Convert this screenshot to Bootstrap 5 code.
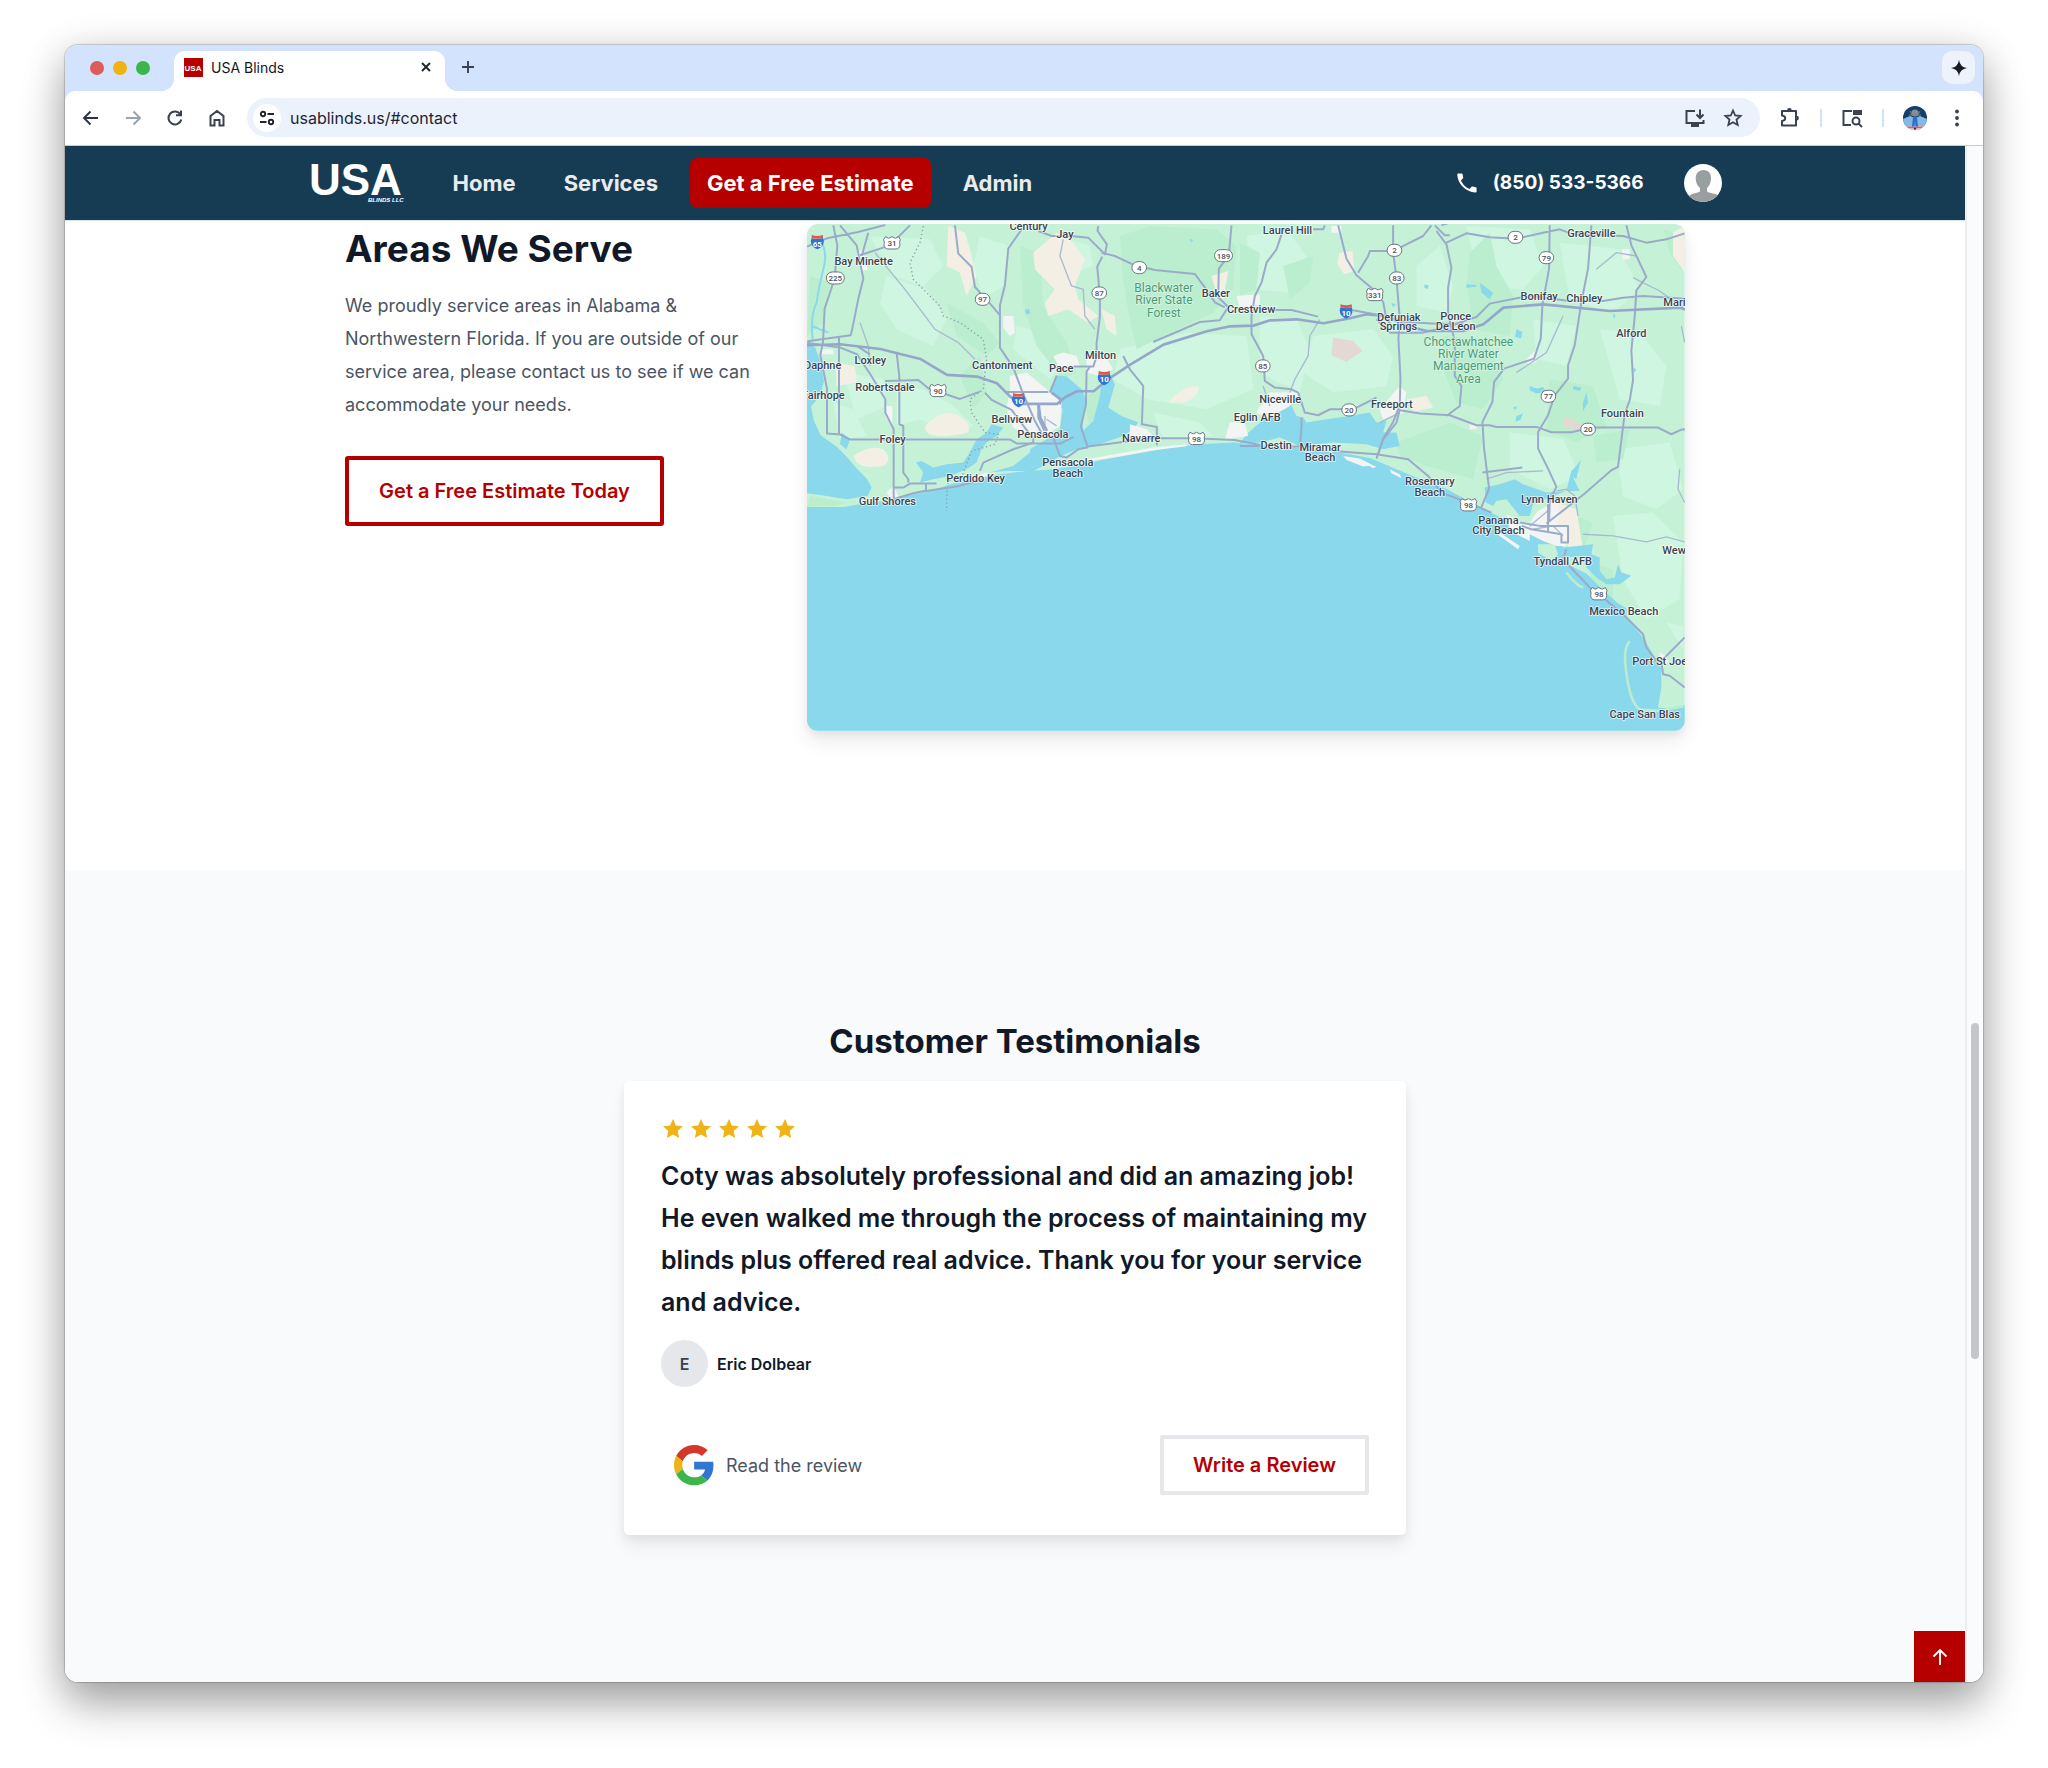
<!DOCTYPE html>
<html lang="en">
<head>
<meta charset="utf-8">
<meta name="viewport" content="width=device-width, initial-scale=1">
<title>USA Blinds</title>
<link href="https://cdn.jsdelivr.net/npm/bootstrap@5.3.0/dist/css/bootstrap.min.css" rel="stylesheet">
<style>
  :root { --navy:#163c54; --brand:#b60000; --ink:#111827; --slate:#4b5563; --icon:#2b3240; }
  body { font-family: Inter, "Liberation Sans", sans-serif; background:#fff; color:var(--ink); min-height:100vh; padding:45px 65px 86px; }
  svg { display:block; flex:none; }
  a { text-decoration:none; }
  .window-frame { border-radius:13px; box-shadow:0 0 1px 1px rgba(0,0,0,.18), 0 22px 44px rgba(0,0,0,.32), 0 4px 40px rgba(0,0,0,.12); }

  /* browser tab strip */
  .tab-strip { height:46px; background:#d3e2fd; padding:6px 8px 0 25px; }
  .lights { gap:9px; padding-top:10px; }
  .light { width:14px; height:14px; border-radius:50%; }
  .light-r { background:#dc5b5b; } .light-y { background:#efb315; } .light-g { background:#3cb64b; }
  .page-tab { width:271px; height:40px; margin-left:24px; padding:0 10px 8px 10px; background:#fff; border-radius:11px 11px 0 0; font-size:14px; }
  .page-tab::before, .page-tab::after { content:""; position:absolute; bottom:0; width:13px; height:13px; }
  .page-tab::before { left:-13px; background:radial-gradient(circle at 0 0, transparent 13px, #fff 13px); }
  .page-tab::after { right:-13px; background:radial-gradient(circle at 100% 0, transparent 13px, #fff 13px); }
  .plain-btn { border:0; background:none; padding:0; line-height:0; }
  .spark-btn { width:33px; height:33px; border-radius:10px; background:#edf2fb; }

  /* browser toolbar */
  .tool-row { height:55px; background:#fff; padding:0 15px 1px; gap:19px; border-bottom:1px solid #c6cccf; border-radius:10px 10px 0 0; }
  .tool-nav { gap:20px; }
  .tool-row .plain-btn { width:22px; height:22px; }
  .tool-row .profile-btn { width:24px; height:24px; }
  .tool-shoulder { background:#d3e2fd; }
  .address-box { height:39px; border-radius:20px; background:#ecf2fb; padding:0 16px 0 6px; }
  .tool-row .site-info { width:28px; height:28px; border-radius:50%; background:#fff; }
  .address-box input { border:0; background:none; outline:0; font-size:16px; color:#1f2530; padding:0; min-width:0; margin-left:9px; }
  .tool-sep { width:2px; height:18px; background:#cfe0fb; }

  /* site header */
  .site-nav { background:var(--navy); height:75px; border-bottom:1px solid #dde4e6; }
  .nav-inner { max-width:1413px; }
  .menu-link { font-size:22px; font-weight:700; color:#e9ebed; line-height:50px; }
  .menu-cta { background:var(--brand); color:#fff; border-radius:7px; padding:0 17px; margin:0 32px; }
  .phone-link { font-size:19px; font-weight:700; color:#fff; }

  /* sections */
  .page-body { background:#fff; min-width:0; }
  .areas-inner { max-width:1340px; }
  .areas-sec { height:649px; padding-top:3px; }
  .areas-map { width:65.5%; border-radius:11px; overflow:hidden; box-shadow:0 12px 20px rgba(0,0,0,.07), 0 4px 8px rgba(0,0,0,.06); }
  .areas-map svg { width:100%; height:auto; font-family:Roboto, sans-serif; }
  .areas-copy { width:415px; }
  .areas-title { font-size:37px; font-weight:700; line-height:50px; margin-bottom:15px; }
  .areas-text { font-size:18px; line-height:33px; color:var(--slate); margin-bottom:35px; }
  .btn-estimate { border:4px solid var(--brand); border-radius:3px; color:var(--brand); font-size:20px; font-weight:600; height:70px; width:319px; padding:0; background:#fff; }
  .testi-sec { background:#f9fafb; padding-top:146px; }
  .testi-title { font-size:33px; font-weight:700; line-height:50px; margin-bottom:15px; }
  .quote-card { max-width:782px; background:#fff; border-radius:5px; padding:36px 37px 40px; box-shadow:0 12px 18px rgba(0,0,0,.06), 0 4px 8px rgba(0,0,0,.06); }
  .quote-text { font-size:25px; font-weight:600; line-height:42px; margin:14px 0 17px; }
  .initial { width:47px; height:47px; border-radius:50%; background:#e5e7eb; color:#374151; font-size:16px; font-weight:600; }
  .reviewer-row { gap:9px; }
  .reviewer { font-size:16px; font-weight:600; }
  .read-link { font-size:18px; color:var(--slate); padding-left:9px; }
  .btn-write { border:4px solid #e5e7eb; border-radius:2px; color:var(--brand); font-size:20px; font-weight:600; width:209px; height:60px; padding:0; background:#fff; }
  .top-btn { width:51px; height:51px; background:var(--brand); }

  /* scroll bar */
  .scroll-col { width:18px; background:#fafbfd; border-left:2px solid #ebedef; padding:0 4px; }
  .scroll-thumb { border-radius:5px; background:#c5c6c9; flex:336 0 0; }
  .scroll-before { flex:877 0 0; } .scroll-after { flex:323 0 0; }
</style>
</head>
<body class="d-flex flex-column">
<div class="window-frame d-flex flex-column flex-grow-1 overflow-hidden">

  <div class="tab-strip d-flex align-items-start">
    <div class="lights d-flex align-items-center">
      <span class="light light-r"></span><span class="light light-y"></span><span class="light light-g"></span>
    </div>
    <div class="page-tab position-relative d-flex align-items-center">
      <svg width="19" height="19" viewBox="0 0 19 19"><rect width="19" height="19" fill="#b60000"/><text x="9" y="13" text-anchor="middle" font-family="Liberation Sans, sans-serif" font-weight="700" font-size="8" fill="#fff">USA</text></svg>
      <span class="ms-2 flex-grow-1">USA Blinds</span>
      <button class="plain-btn" aria-label="Close tab"><svg width="18" height="18" viewBox="0 0 18 18" stroke="#1f2530" stroke-width="1.9"><path d="M5 5l8 8M13 5l-8 8"/></svg></button>
    </div>
    <button class="plain-btn ms-3 mt-2" aria-label="New tab"><svg width="14" height="18" viewBox="0 0 14 18" stroke="#3a4250" stroke-width="1.9"><path d="M1 8h12M7 2v12"/></svg></button>
    <button class="plain-btn spark-btn ms-auto d-flex align-items-center justify-content-center" aria-label="Assistant"><svg width="16" height="16" viewBox="0 0 16 16"><path d="M8 0Q9 7 16 8Q9 9 8 16Q7 9 0 8Q7 7 8 0Z" fill="#161c28"/></svg></button>
  </div>

  <div class="tool-shoulder">
  <div class="tool-row d-flex align-items-center">
    <div class="tool-nav d-flex align-items-center">
      <button class="plain-btn" aria-label="Back"><svg width="22" height="22" viewBox="0 0 22 22" fill="none" stroke="#2b3240" stroke-width="1.9"><path d="M18 11H4M10.500 4.500L4 11l6.500 6.500"/></svg></button>
      <button class="plain-btn" aria-label="Forward"><svg width="22" height="22" viewBox="0 0 22 22" fill="none" stroke="#9aa3ab" stroke-width="1.900"><path d="M4 11h14M11.500 4.500L18 11l-6.500 6.500"/></svg></button>
      <button class="plain-btn" aria-label="Reload"><svg width="22" height="22" viewBox="0 0 22 22" fill="none" stroke="#3a4250" stroke-width="2"><path d="M16.500 7.500A6.500 6.500 0 1 0 17.300 12.500M17 3.500V8.300H12"/></svg></button>
      <button class="plain-btn" aria-label="Home"><svg width="22" height="22" viewBox="0 0 22 22" fill="none" stroke="#3a4250" stroke-width="2"><path d="M4.500 18.500V9L11 4l6.500 5v9.500h-4V13h-5v5.500z"/></svg></button>
    </div>
    <div class="address-box d-flex align-items-center flex-grow-1">
      <button class="plain-btn site-info d-flex align-items-center justify-content-center" aria-label="Site information"><svg width="16" height="16" viewBox="0 0 16 16" fill="none" stroke="#1f2530" stroke-width="1.900"><circle cx="4" cy="4" r="2.200"/><path d="M8.500 4H15M1 12h6.500"/><circle cx="12" cy="12" r="2.200"/></svg></button>
      <input class="flex-grow-1" type="text" value="usablinds.us/#contact" aria-label="Address">
      <button class="plain-btn me-3" aria-label="Install app"><svg width="22" height="22" viewBox="0 0 22 22" fill="none" stroke="#3a4250" stroke-width="2"><path d="M11 4H2.500v12h17v-3M16 2.500v8M12.500 7.500L16 11l3.500-3.500"/><path d="M7 18.500h8" stroke-width="3"/></svg></button>
      <button class="plain-btn" aria-label="Bookmark"><svg width="22" height="22" viewBox="0 0 22 22" fill="none" stroke="#3a4250" stroke-width="1.800"><path d="M11 3.500l2.200 5 5.400.5-4.100 3.600 1.200 5.400L11 15.200 6.300 18l1.200-5.400L3.400 9l5.400-.5z"/></svg></button>
    </div>
    <button class="plain-btn" aria-label="Extensions"><svg width="22" height="22" viewBox="0 0 22 22" fill="none" stroke="#3a4250" stroke-width="2"><path d="M3 4h14v14.500H3v-4.500q3.200-.5 3.200-2.800T3 8.500z" stroke-linejoin="round"/><path d="M8 3.500a2.400 2.400 0 0 1 4.800 0zM17.500 8.800a2.400 2.400 0 0 1 0 4.800z" fill="#3a4250" stroke="none"/></svg></button>
    <span class="tool-sep"></span>
    <button class="plain-btn" aria-label="Search tabs"><svg width="22" height="22" viewBox="0 0 22 22" fill="none" stroke="#3a4250" stroke-width="2"><path d="M11 4H2.500v14H10"/><path d="M12 3h9v5h-9z" fill="#3a4250" stroke="none"/><circle cx="15" cy="14" r="3.500"/><path d="M17.500 16.500l3.500 3.500"/></svg></button>
    <span class="tool-sep"></span>
    <button class="plain-btn profile-btn" aria-label="Profile"><svg width="24" height="24" viewBox="0 0 24 24"><clipPath id="pf"><circle cx="12" cy="12" r="12"/></clipPath><g clip-path="url(#pf)"><path d="M0 0h24v24H0z" fill="#143f6b"/><path d="M0 13l7-3 5 2 5-2 7 3v8H0z" fill="#83b9e6"/><path d="M3 20.500h18V24H3z" fill="#fff"/><path d="M4 20.500h16v2H4z" fill="#e45b5b"/><path d="M10 11h4l1 9.500h-2.500L12 15l-.5 5.500H9z" fill="#2c6fc9"/><circle cx="12" cy="7" r="3.600" fill="#8e8d89"/><path d="M7 5l2 4M17 5l-2 4M6 9h12" stroke="#77838e" fill="none"/><path d="M12 21.500l1.500 1.500L12 24l-1.500-1z" fill="#222"/></g></svg></button>
    <button class="plain-btn" aria-label="Menu"><svg width="22" height="22" viewBox="0 0 22 22" fill="#3a4250"><circle cx="11" cy="4.500" r="1.900"/><circle cx="11" cy="11" r="1.900"/><circle cx="11" cy="17.500" r="1.900"/></svg></button>
  </div>
  </div>

  <div class="d-flex flex-grow-1">
    <div class="page-body flex-grow-1 d-flex flex-column position-relative">
      <nav class="site-nav d-flex justify-content-center">
        <div class="nav-inner d-flex align-items-center w-100">
          <a href="#home" aria-label="USA Blinds LLC"><svg width="96" height="50" viewBox="0 0 96 50" fill="#fff" font-family="Liberation Sans, sans-serif" font-weight="700"><text x="0" y="37" font-size="44">USA</text><text x="59" y="44" font-size="6" font-style="italic">BLINDS LLC</text></svg></a>
          <a class="menu-link mx-5" href="#home">Home</a>
          <a class="menu-link" href="#services">Services</a>
          <a class="menu-link menu-cta" href="#contact">Get a Free Estimate</a>
          <a class="menu-link" href="#admin">Admin</a>
          <a class="phone-link d-flex align-items-center ms-auto" href="tel:8505335366"><svg class="me-3" width="20" height="20" viewBox="0 0 20 20" fill="#fff"><path d="M1.500.4h3c.6 0 1 .3 1.100.9l.6 3.100c.1.500 0 .9-.4 1.200L3.900 7.400c1.700 3.700 4.500 6.500 8.500 8.600l2-2.100c.3-.4.800-.5 1.200-.4l3.100.8c.6.100.9.500.9 1.100v3c0 .700-.5 1.200-1.200 1.200C8.800 19.200.5 10.800.3 1.600.3.900.8.400 1.500.4z"/></svg>(850) 533-5366</a>
          <a class="ms-4 ps-3" href="#account" aria-label="Account"><svg width="38" height="38" viewBox="0 0 38 38"><clipPath id="ua"><circle cx="19" cy="19" r="19"/></clipPath><circle cx="19" cy="19" r="19" fill="#fff"/><path clip-path="url(#ua)" d="M19.500 6c5 0 8 3.500 7.500 9-.3 4-1.500 7-4 9v3c0 2 9 2 12 5v6H4v-5c2-4 12-4 12-6v-3c-2.500-2-4-5-4.300-9C11.500 9.500 14.500 6 19.500 6z" fill="#999e9e"/></svg></a>
        </div>
      </nav>

      <section class="areas-sec d-flex justify-content-center">
        <div class="areas-inner w-100 d-flex justify-content-between align-items-start">
          <div class="areas-copy">
            <h2 class="areas-title">Areas We Serve</h2>
            <p class="areas-text">We proudly service areas in Alabama &amp; Northwestern Florida. If you are outside of our service area, please contact us to see if we can accommodate your needs.</p>
            <button class="btn btn-estimate">Get a Free Estimate Today</button>
          </div>
          <div class="areas-map">
            <svg viewBox="21 24 2634 1521" role="img" aria-label="Map of the service area">
              <rect x="21" y="24" width="2634" height="1521" fill="#c5f2d7"/>
              <!-- lighter fields -->
              <g fill="#cef6e0">
                <path d="M210 60l180 10 40 80-60 60-90-30zM260 180l120 40 60 90-40 80-110-50-50-80zM540 60l90 30-20 120-60 40-30-100zM650 330l90 20 60 90-50 50-110-90zM130 470l120 20 10 80-90 40zM290 510l80 10 90 50 60 60-60 20-100-40-70 20zM780 60l90 30 10 60-60 20zM960 400l200-50 180 10 20 160-140 60-180-30-100-60zM1060 590l140 30 40 40-150 10z"/>
                <path d="M1340 60l120-20 60 80-40 110-120-10zM1380 300l110 10 40 90-30 130-120-60zM1540 360l180-20 60 80-20 90-160 20-90-60zM1850 150l70-60 40 120-20 80-90-20zM2000 30l190 10 40 110-60 70-130-10zM2280 80l180 20 60 120-80 70-130-40zM2200 310l130 20-30 120-90-20zM2400 340l120 10 80 100-20 120-120-20zM2130 650l160 20 50 110-90 40-120-60zM2450 700l160-20 40 140-80 60-100-40zM2440 900l120-10 90 90-10 170-100 60-70-120zM2600 1220l50 10v70z"/>
                <path d="M100 560l60 20 40 80-80 10z"/>
              </g>
              <!-- denser woodland -->
              <g fill="#baeecf">
                <path d="M660 90l60 20 10 160 70 110 30 90-40 20-80-100-40-120zM960 60l90-30 200 10 60 50-10 130-60 70-130 60-100 50-20-90-20-110zM30 180l60 20-20 120-50 40zM440 260l110 60 50 60-40 40-90-60zM480 480l60-60 20 110-40 50z"/>
                <path d="M1320 80l60 30-10 110-50 20zM2010 110l60-60 20 100 50 90-10 120-110-20-20-140zM1930 360l130 10 50 120-60 90-80-20-40-100zM1450 150l90-30-10 80-60 50zM1790 680l160-60 100 40-30 130-140-40-80-30zM2250 490l130 20 40 120-90 50-90-40zM2380 660l110-20-20 90-80 10zM2280 880l100 40-30 90-60-60zM2370 1040l70 20v110l-60-30zM2590 40l60 20v110l-40-60z"/>
                <path d="M30 840l110 20-40 10-79 2zM850 560l50-60 10 60-40 70z"/>
              </g>
              <!-- farmland -->
              <g fill="#f4efe4">
                <path d="M445 30l50 20 20 70 15 60-30 60-20-70-40-20zM700 110l70-60 50 30 35 50-30 80 10 40 60 50-30 20-60-40-60 20-10-40 30-40-60-60zM905 280l40 20 5 60-30-20zM1105 560q40-50 90-50 10 25-40 50zM375 630q50-50 90-35 50 20 40 55-60 15-90 10-40 0-40-30zM160 720q50-35 90-20 30 30 0 50-60 10-80-10zM105 440l60 10 5 50-60 10zM1235 180l50-15-15 90-25-40zM1618 110l40-5 5 60-30 10-20-30zM1820 550l60-10 20 35-60 12zM2620 50l35-20v140l-35-50zM2270 860l60 20 10 60 10 60-30 20-30-60-30-20z"/>
              </g>
              <g fill="#e4d8d3"><path d="M1600 365l60 10 28 30-48 33-45-20zM2292 600l60 28-20 18-40-15z"/></g>
              <!-- water -->
              <g fill="#8ad8ec">
                <path d="M21 385l25 10 14 40 12 60-12 45-27 32 8 40 20 45 50 36 30 30 25 30 35 36 14 26-12 25-63 10-60-10-59-8z"/>
                <path d="M21 873l110 0 60-10 90-12 60-16 60-13 50-17 70-15 80-15 80-10 80-5 90-15 50-12 100-18 100-18 100-12 100-5 80 7 80 5 80 8 90 12 80 14 70 30 80 33 80 30 60 33 70 37 50 25 60 40 60 50 60 40 60 30 45 45 45 40 30 20L2480 1205 2530 1265 2560 1315 2585 1355V1415L2575 1475 2610 1478 2655 1468V1545H21z"/>
                <path d="M750 520l20-42 30 4 45 38 17 40-12 50-2 35 32-30 20-75 5-35-10-25 10-40 10 5 15 30 15 30-20 70 40 25 50 20-15 20-30 20-80 28-60 12-50 22-40 23-40 20h-80l-60 5 80-40 50-30 50-30 40-30 8-60-28-35z"/>
                <path d="M575 625l35 10-20 25-30 20-15 20-15 40-30 20-50 20-50 10-40 10 10-30-22-30 17-5 35 20 40-10 50-5 20-30 20-40 30-20zM125 650l25 20-10 30-20-15z"/>
                <path d="M1340 655l40-35 40-20 20-25 30-15 20 40 20 5 10 15 60-10 70-10 60-10 20 30 30-5-10 35 40 0 10 40-50 10-50-15-100-5-100 10-60-25-60 15-60 2z"/>
                <path d="M2055 815l45-10 45-15 25 15 70 25 60-5 15-60 20-20-15 40 20 40-40 0-40 15-60 25-10 35-30 0-20-25-20-25-30 5-10 15-22-10z"/>
                <path d="M2160 920l40 25 60 20 30 30 90-10-5 30 25 10v40l20 25 25-5 10-40 10 25 30 10-35 25-40 0-30-20-30-30-10-35-60 5-50 10-40-20-20-30-15-25 25 5z"/>
                <path d="M2040 200l40 30-10 20-25-20zM2150 340l18 8-4 20-18-6zM2190 510l20 8 20-5 10 15-30 5-20-10zM2320 510l25 5-5 10-20-5zM2350 560l10-30 5 30-15 25zM2150 600l20-8-8 20-15 5zM1875 205l12 4-4 10-10-4zM1775 260l14 6-10 8zM2440 290l8 10-6 8zM2500 455l10 6-8 12zM2140 575l12-4-4 12zM2330 750l14-20-14 60-10-5zM2000 205l30 2v5l-30 3zM675 282l12-4 4 14-12 4zM1170 68l10 4-6 8z"/>
              </g>
              <path d="M52 60q35 40 18 100-15 60-20 100-20 40-12 110M35 330l50 20" fill="none" stroke="#8ad8ec" stroke-width="6"/>
              <path d="M2490 1275q-16 20-14 60 6 70 20 110 12 30 26 36l60 4 70-14M2300 1070q30 40 50 45" fill="none" stroke="#b9ecd0" stroke-width="8"/>
              <path d="M600 690l90-10 0 30-50 40-90 25-60 15 30-20zM2215 985l50 0 10 30-20 20-40-25z" fill="#c5f2d7"/>
              <!-- towns -->
              <g fill="#f3f4f4">
                <path d="M610 300l30 0 5 50-15 10-20-25zM630 480l50-10 60 50 45 40-5 70-40 25-60 10-40-30-20-60 10-50zM760 420l30-10 40 10 10 30-60 10zM860 410l50 0 30 50-40 20-40-10zM170 110l20-10 5 40 10 20-20 5zM60 400h40v15h-40zM255 570h22v60l-20-25zM990 625l50 15 20 20-70 10zM1290 620l45 0 10 40-70 10zM1310 240l70-5v30l-60 15zM1380 570l50-20 10 30-50 20-20-10zM1410 530l90 0-30 40-70 40-20-30zM1740 580l60-70 20 20-10 60-60 20zM2180 430l30-30v40l-25 5zM2010 625h20v15h-20zM1630 720l50 8 40 20-30 4-50-20zM1770 760l30 15 5 12-30-15zM2210 890l60-40 10 40-10 60-90-10zM2180 920l120 10 0 60-30 0-40-15-60-30zM2120 895l70 35 0 45-60-30zM2580 1310l20 10 5 20-20 20zM2465 100h25v30h-20zM1595 30h30v20h-30zM260 830l20-20 15 30-20 12z"/>
                <path d="M800 745l60-15 100-18 100-17 100-10v6l-100 12-100 18-100 16zM1690 740l40 12-10 5zM2100 950l60 40-5 10-70-50zM500 790l60-20 10 8-60 15z"/>
              </g>
              <!-- state line -->
              <path d="M370 30l-10 50-30 60 10 50 80 80 10 30 50 20 70 50 10 60-10 90-40 30 5 40 40 60 40 5-10 30-70 20-30 80-40 10-5 50v40" fill="none" stroke="#8f9cab" stroke-width="4" stroke-dasharray="4 8"/>
              <!-- minor roads -->
              <g fill="none" stroke="#a9bad0" stroke-width="4">
                <path d="M225 110l90 110 60 80 30 40 70 40 50 50M180 320l25 70 5 60M790 70l-10 50 35 90 35 10 5 80 30 40M1560 310l-30 50-5 60-40 70-15 40M2290 300l-50 110-60 40-30 20M2390 160l60-50 60 10M2655 380l-10-50M2350 955l90 5 100 18 60-15 55 15M2060 790l60-20 110-5M2500 185l80 40 70 50M1740 620l60-30M2640 760l-5 60 20 40M735 600l0 40M740 610l30 20M1390 510l20 60M2190 930l60-50M2200 940l60-10 30 30M2270 825l30-5 25 20 10 60"/>
              </g>
              <!-- main roads -->
              <g fill="none" stroke="#9aabca" stroke-width="6" stroke-linejoin="round">
                <path d="M21 92l60-25 90-18 85-22M330 28l-60 60-90 30M100 28l12 60-8 100-30 90-5 100-8 40 20 100v135l40 3 30 15h480l20 12 130 0 40-20M120 28l50 60 20 100-15 60-18 90-5 20-130 18M205 50l-20 70"/>
                <path d="M21 380l100 15 50 20 40 60 45 75v40l25 50 0 230M170 390l40 25M117 365v290M290 410l8 70v145l12 5v140l15 20v10M280 815l30 0 20-12h80M378 800v25l100-15 70-20M255 495l100-3 30 25 95 32 60-22M280 850l60-18 40-8M555 530l20 22 60 30 60 80M700 665v15l-60 20-90 40-10 25"/>
                <path d="M465 28l10 85 40 40 10 60 50 55 25 30 0-30 15-60 10-110 45-65M600 300v95l40 60 30 80 35 80 25 45M750 530l20-50M620 528h125M820 452h60l10-30v-40l10-80 0-60-8-90 15-30M895 30l-2 15 28 40-6 30-50-50-50-5h-60l-40-15M905 110l40 10 60 28 60 14 120 12 30 40 30 45 30 15M1295 28l-8 90-30 40-2 85 30 30-25 40-60 5-140 60M870 452l-10 15-2 100-15 65 20 60 60-8 90-12 50-5h120l120 5 80 15M970 420l20 40 40 50-4 115 45 8v55M760 665l20 55 20 5 35-25 30-6M715 565v40l18 40"/>
                <path d="M1450 40l-20 60-30 40-15 60-20 40-10 60v55l35 65 5 75 30 20 50 5 20 10 20 60 40 8 35-18h30l50-5 60-30M1505 605v30l-5 55M1320 690l60 0M1470 692h60M1425 282h50l80 20M1540 40h30l5-12M1615 28l25 100 30 50 60 50 20 30 10 50 20 30M1675 170l30-50 5-15h70M1780 28l0 80 10 80 10 120-4 60 6 120-2 80 -20 50-30 50-20 60M1660 283l80 15 80 20 90 5 60 0 60-20 40-40 100-20M1730 310l40 40h100l120-30"/>
                <path d="M1790 100l80-40 25-32M1905 28l30 30 15 0M1925 28l30-10M1910 45l30 40 15 70-10 60v80l20 80v105l20 30-5 60-40 30M1940 80l60-28 70 12 80 4 80-18 50-10 40 15 150 5 70 20 60-10 55-18M2250 28l-2 130-20 110-5 100-20 60-90 30-30 40-5 60-30 60 5 80 15 120-25 60M1800 583l60 10 90 5 80 30h40l20 5h120l45 16h60l60-14h200l40 20 30-14h45M1800 580l-10 40-40 50-15 45"/>
                <path d="M2375 28l-10 130-20 100-20 130-20 60v40l-40 50-20 60 -30 50v50l30 60 25 55-20 40-2 65M2480 28l15 60 45 95-30 40-5 80-10 100 5 90-10 60-15 40-20 160-20 10-80 70-115 90M2190 240l120 15 100 0 60-10 60-5 125 8M2048 770l120-15M1600 705l130 10 95 15 60 50 40 50 80 30 70 30M2160 920l60 10h85v50h-20v-25l-90-15-30-10M2245 865v80M2300 1000l-10 30 80 85 40 30 70 60 50 50 10 40 30 40M2655 1265l-50 50-20 20 5 40 20 5 45 35"/>
              </g>
              <!-- motorways -->
              <path d="M21 388l100-3 120 14 120 30 80 48 90 5 60 20 40 40 30 22h110l25-20 35-18h50l50-40 60-40 100-60 130-40 70-15 70-2 50-16 80-3 80 12 80-15 50-12 60 5 60 30 60 15h110l60-20 60-50 120-10 200 20 210-10 70 25M716 565l5 40 20 40M755 530l28 20-5 15" fill="none" stroke="#94a7cb" stroke-width="8" stroke-linejoin="round"/>

              <!-- route shields -->
              <g fill="#fff" stroke="#6b7483" stroke-width="3">
                <rect x="79" y="168" width="54" height="36" rx="18"/><rect x="526" y="232" width="44" height="36" rx="18"/><rect x="876" y="213" width="44" height="36" rx="18"/><rect x="996" y="137" width="44" height="36" rx="18"/><rect x="1244" y="101" width="54" height="36" rx="18"/>
                <rect x="1762" y="85" width="44" height="36" rx="18"/><rect x="1769" y="168" width="44" height="36" rx="18"/><rect x="2125" y="46" width="44" height="36" rx="18"/><rect x="2218" y="107" width="44" height="36" rx="18"/><rect x="1367" y="432" width="44" height="36" rx="18"/><rect x="1626" y="564" width="44" height="36" rx="18"/><rect x="2224" y="523" width="44" height="36" rx="18"/><rect x="2343" y="622" width="44" height="36" rx="18"/>
                <path id="us" d="M256 62l10 5 10-5 10 5 10-5 5 9q-4 8-1 15-1 13-12 13h-24q-11 0-12-13 3-7-1-15z"/>
                <use href="#us" x="138" y="443"/><use href="#us" x="914" y="587"/><use href="#us" x="1449" y="155"/><use href="#us" x="1730" y="786"/><use href="#us" x="2121" y="1053"/>
              </g>
              <g>
                <g id="ih"><path d="M35 66q17 6 34 0 5 10 1 18-4 10-18 16-14-6-18-16-4-8 1-18z" fill="#2f74cf"/><path d="M35 57q17 6 34 0v9q-17 5-34 0z" fill="#e2574c"/></g>
                <use href="#ih" x="604" y="474"/><use href="#ih" x="861" y="408"/><use href="#ih" x="1587" y="208"/>
              </g>
              <g font-size="24" fill="#4a5260" text-anchor="middle" font-weight="500">
                <text x="106" y="195">225</text><text x="548" y="259">97</text><text x="898" y="240">87</text><text x="1018" y="164">4</text><text x="1271" y="128">189</text><text x="1784" y="112">2</text><text x="1791" y="195">83</text><text x="2147" y="73">2</text><text x="2240" y="134">79</text><text x="1389" y="459">85</text><text x="1648" y="591">20</text><text x="2246" y="550">77</text><text x="2365" y="649">20</text>
                <text x="276" y="91">31</text><text x="414" y="534">90</text><text x="1190" y="679">98</text><text x="1725" y="246">331</text><text x="2006" y="877">98</text><text x="2398" y="1144">98</text>
                <g fill="#fff" font-weight="700"><text x="52" y="92">65</text><text x="656" y="565">10</text><text x="913" y="499">10</text><text x="1639" y="299">10</text></g>
              </g>
              <!-- place names -->
              <g font-size="33" fill="#3b4350" text-anchor="middle" font-weight="500" stroke="#fff" stroke-opacity=".75" stroke-width="5" paint-order="stroke" stroke-linejoin="round">
                <text x="686" y="42">Century</text><text x="795" y="66">Jay</text><text x="191" y="146">Bay Minette</text><text x="211" y="444">Loxley</text><text x="68" y="459">Daphne</text><text x="70" y="550">Fairhope</text><text x="255" y="526">Robertsdale</text><text x="607" y="459">Cantonment</text><text x="784" y="467">Pace</text><text x="902" y="430">Milton</text><text x="636" y="621">Bellview</text><text x="729" y="667">Pensacola</text><text x="278" y="680">Foley</text><text x="804" y="750">Pensacola</text><text x="804" y="782">Beach</text><text x="527" y="798">Perdido Key</text><text x="262" y="867">Gulf Shores</text><text x="1024" y="677">Navarre</text><text x="1248" y="244">Baker</text><text x="1354" y="292">Crestview</text>
                <text x="1463" y="53">Laurel Hill</text><text x="2375" y="63">Graceville</text><text x="1797" y="315">Defuniak</text><text x="1796" y="342">Springs</text><text x="1968" y="311">Ponce</text><text x="1968" y="342">De Leon</text><text x="2218" y="252">Bonifay</text><text x="2354" y="257">Chipley</text><text x="2495" y="363">Alford</text><text x="1441" y="560">Niceville</text><text x="1372" y="616">Eglin AFB</text><text x="1776" y="576">Freeport</text><text x="2468" y="603">Fountain</text><text x="1429" y="699">Destin</text><text x="1561" y="704">Miramar</text><text x="1561" y="736">Beach</text><text x="1890" y="806">Rosemary</text><text x="1890" y="839">Beach</text><text x="2249" y="861">Lynn Haven</text><text x="2096" y="925">Panama</text><text x="2096" y="954">City Beach</text><text x="2289" y="1047">Tyndall AFB</text><text x="2472" y="1196">Mexico Beach</text><text x="2580" y="1347">Port St Joe</text><text x="2535" y="1507">Cape San Blas</text>
                <text x="2591" y="270" text-anchor="start">Mari</text><text x="2588" y="1013" text-anchor="start">Wew</text>
              </g>
              <g font-size="36" fill="#4a9a77" text-anchor="middle" stroke="#d9f7e6" stroke-width="4" paint-order="stroke">
                <text x="1092" y="228">Blackwater</text><text x="1092" y="265">River State</text><text x="1092" y="303">Forest</text>
                <text x="2006" y="390">Choctawhatchee</text><text x="2006" y="427">River Water</text><text x="2006" y="463">Management</text><text x="2006" y="502">Area</text>
              </g>
            </svg>
          </div>
        </div>
      </section>

      <section class="testi-sec flex-grow-1 d-flex flex-column align-items-center">
        <h2 class="testi-title">Customer Testimonials</h2>
        <article class="quote-card w-100">
          <div class="d-flex" role="img" aria-label="5 out of 5 stars">
            <svg width="136" height="24" viewBox="0 0 136 24" fill="#efb315"><path id="st" d="M12 2l2.900 6.500 7.100.7-5.300 4.700 1.500 7.100L12 17.400 5.800 21l1.500-7.100L2 9.200l7.100-.7z"/><use href="#st" x="28"/><use href="#st" x="56"/><use href="#st" x="84"/><use href="#st" x="112"/></svg>
          </div>
          <p class="quote-text">Coty was absolutely professional and did an amazing job! He even walked me through the process of maintaining my blinds plus offered real advice. Thank you for your service and advice.</p>
          <div class="reviewer-row d-flex align-items-center mb-5">
            <span class="initial d-flex align-items-center justify-content-center">E</span>
            <span class="reviewer">Eric Dolbear</span>
          </div>
          <div class="d-flex align-items-center justify-content-between">
            <a class="read-link d-flex align-items-center" href="#reviews"><svg class="me-2" width="48" height="48" viewBox="0 0 48 48"><g transform="translate(4 4) scale(.84)"><path fill="#d4382a" d="M24 9.500c3.540 0 6.710 1.220 9.210 3.600l6.850-6.850C35.900 2.380 30.470 0 24 0 14.620 0 6.510 5.380 2.560 13.220l7.980 6.190C12.430 13.720 17.740 9.500 24 9.500z"/><path fill="#3277cf" d="M46.980 24.550c0-1.570-.15-3.090-.38-4.550H24v9.020h12.940c-.58 2.960-2.260 5.480-4.780 7.180l7.730 6c4.510-4.180 7.090-10.360 7.090-17.650z"/><path fill="#efb315" d="M10.530 28.590c-.48-1.450-.76-2.990-.76-4.590s.27-3.140.76-4.590l-7.980-6.190C.92 16.460 0 20.120 0 24s.92 7.540 2.560 10.780l7.970-6.190z"/><path fill="#3cb64b" d="M24 48c6.480 0 11.930-2.130 15.890-5.810l-7.730-6c-2.150 1.450-4.920 2.300-8.160 2.300-6.260 0-11.570-4.220-13.470-9.910l-7.980 6.190C6.510 42.620 14.620 48 24 48z"/></g></svg>Read the review</a>
            <button class="btn btn-write">Write a Review</button>
          </div>
        </article>
      </section>

      <button class="plain-btn top-btn position-absolute bottom-0 end-0 d-flex align-items-center justify-content-center" aria-label="Back to top"><svg width="18" height="18" viewBox="0 0 18 18" fill="none" stroke="#fff" stroke-width="1.900"><path d="M9 17V2M2.500 8.500L9 2l6.500 6.500"/></svg></button>
    </div>
    <div class="scroll-col d-flex flex-column"><span class="scroll-before"></span><span class="scroll-thumb"></span><span class="scroll-after"></span></div>
  </div>
</div>
<script src="https://cdn.jsdelivr.net/npm/bootstrap@5.3.0/dist/js/bootstrap.bundle.min.js"></script>
</body>
</html>
